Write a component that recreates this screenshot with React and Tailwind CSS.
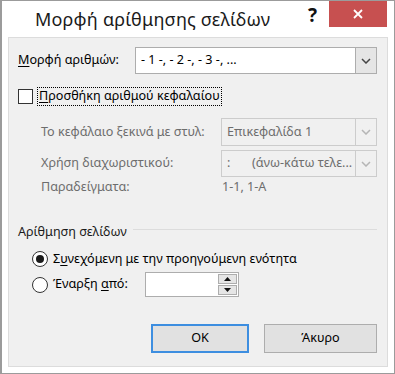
import React from "react";

function Chevron({ color = "#444" }) {
  return (
    <svg width="10" height="6" viewBox="0 0 10 6">
      <path d="M1 1 L5 5 L9 1" fill="none" stroke={color} strokeWidth="1.5" />
    </svg>
  );
}

export default function App() {
  return (
    <div className="w-[395px] h-[374px] bg-white border border-[#9b9b9b] border-l-2 flex flex-col font-['Noto_Sans',sans-serif] text-[12.6px] text-[#000] overflow-hidden">
      {/* Title bar */}
      <div className="h-[36px] flex items-start shrink-0">
        <div className="pl-[33px] pt-[6px] text-[18px] leading-[24px] text-[#1a1a1a] tracking-[0.2px]">
          Μορφή αρίθμησης σελίδων
        </div>
        <div className="flex-1" />
        <div className="mt-[3px] mr-[12px] text-[19px] font-bold leading-[22px] text-[#111]">?</div>
        <div className="w-[58px] h-[26px] bg-[#c75050] flex items-center justify-center mr-[7px]">
          <svg width="10" height="10" viewBox="0 0 10 10">
            <path d="M1 1 L9 9 M9 1 L1 9" stroke="white" strokeWidth="1.8" />
          </svg>
        </div>
      </div>

      {/* Panel */}
      <div className="mx-[6px] h-[330px] border border-[#dcdcdc] bg-[#f0f0f0] flex flex-col pl-[9px] pr-[10px]">
        {/* Row 1 */}
        <div className="mt-[9px] flex items-center h-[27px]">
          <div className="w-[117px]">
            <span className="underline underline-offset-2">Μ</span>ορφή αριθμών:
          </div>
          <div className="flex-1 h-[27px] bg-white border border-[#adadad] flex items-center">
            <div className="flex-1 pl-[5px] whitespace-nowrap">- 1 -, - 2 -, - 3 -, ...</div>
            <div className="w-[21px] h-full bg-[#e5e5e5] border-l border-[#adadad] flex items-center justify-center">
              <Chevron />
            </div>
          </div>
        </div>

        {/* Checkbox row */}
        <div className="mt-[13px] flex items-center h-[19px]">
          <div className="w-[15px] h-[15px] bg-white border border-[#333]" />
          <div className="ml-[4px] h-[19px] px-[1px] border border-dotted border-black flex items-center whitespace-nowrap">
            <span className="underline underline-offset-2">Π</span>ροσθήκη αριθμού κεφαλαίου
          </div>
        </div>

        {/* Disabled section */}
        <div className="mt-[12px] flex items-center h-[28px] text-[#6d6d6d]">
          <div className="pl-[23px] w-[203px] whitespace-nowrap">Το κεφάλαιο ξεκινά με στυλ:</div>
          <div className="flex-1 h-[28px] border border-[#cccccc] bg-[#f0f0f0] flex items-center">
            <div className="flex-1 pl-[5px] whitespace-nowrap text-[#6d6d6d]">Επικεφαλίδα 1</div>
            <div className="w-[21px] h-full border-l border-[#cccccc] flex items-center justify-center">
              <Chevron color="#b5b5b5" />
            </div>
          </div>
        </div>
        <div className="mt-[4px] flex items-center h-[27px] text-[#6d6d6d]">
          <div className="pl-[23px] w-[203px] whitespace-nowrap">Χρήση διαχωριστικού:</div>
          <div className="flex-1 h-[27px] border border-[#cccccc] bg-[#f0f0f0] flex items-center overflow-hidden">
            <div className="flex-1 pl-[5px] whitespace-nowrap overflow-hidden text-[#6d6d6d] flex">
              <span className="w-[25px]">:</span>
              <span>(άνω-κάτω τελε...</span>
            </div>
            <div className="w-[21px] h-full border-l border-[#cccccc] flex items-center justify-center shrink-0">
              <Chevron color="#b5b5b5" />
            </div>
          </div>
        </div>
        <div className="mt-[0px] flex items-center h-[20px] text-[#6d6d6d]">
          <div className="pl-[23px] w-[204px] whitespace-nowrap">Παραδείγματα:</div>
          <div>1-1, 1-A</div>
        </div>

        {/* Group */}
        <div className="mt-[27px] flex items-center h-[16px]">
          <div className="whitespace-nowrap text-[#1a1a1a]">Αρίθμηση σελίδων</div>
          <div className="flex-1 ml-[6px] h-px bg-[#dcdcdc] -mt-[5px]" />
        </div>

        <div className="mt-[9px] flex items-center h-[20px] pl-[14px]">
          <div className="w-[16px] h-[16px] rounded-full bg-white border border-[#333] flex items-center justify-center">
            <div className="w-[8px] h-[8px] rounded-full bg-[#1a1a1a]" />
          </div>
          <div className="ml-[5px] whitespace-nowrap">
            Σ<span className="underline underline-offset-2">υ</span>νεχόμενη με την προηγούμενη ενότητα
          </div>
        </div>

        <div className="mt-[3px] flex items-center h-[25px] pl-[14px]">
          <div className="w-[16px] h-[16px] rounded-full bg-white border border-[#333]" />
          <div className="ml-[5px] w-[92px] whitespace-nowrap">
            Έναρξη <span className="underline underline-offset-2">α</span>πό:
          </div>
          <div className="w-[94px] h-[25px] bg-white border border-[#adadad] flex justify-end items-stretch p-[1px]">
            <div className="w-[19px] flex flex-col gap-[1px]">
              <div className="flex-1 bg-[#e5e5e5] border border-[#adadad] flex items-center justify-center">
                <svg width="7" height="4" viewBox="0 0 7 4"><path d="M0 4 L3.5 0 L7 4 Z" fill="#111" /></svg>
              </div>
              <div className="flex-1 bg-[#e5e5e5] border border-[#adadad] flex items-center justify-center">
                <svg width="7" height="4" viewBox="0 0 7 4"><path d="M0 0 L3.5 4 L7 0 Z" fill="#111" /></svg>
              </div>
            </div>
          </div>
        </div>

        {/* Buttons */}
        <div className="mt-[27px] flex justify-end gap-[15px]">
          <div className="w-[98px] h-[29px] bg-[#e1e1e1] border-2 border-[#3d8ee0] flex items-center justify-center">OK</div>
          <div className="w-[113px] h-[29px] bg-[#e1e1e1] border border-[#adadad] flex items-center justify-center">Άκυρο</div>
        </div>
      </div>
    </div>
  );
}
